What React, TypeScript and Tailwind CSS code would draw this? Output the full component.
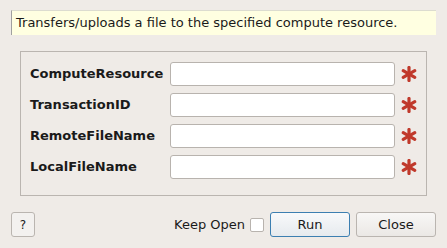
import React from 'react'

const fields = ['ComputeResource', 'TransactionID', 'RemoteFileName', 'LocalFileName']

function Asterisk() {
  return (
    <svg width="16" height="16" viewBox="0 0 16 16" className="shrink-0">
      <g stroke="#c0392b" strokeWidth="3.2" strokeLinecap="round">
        <line x1="8" y1="1.5" x2="8" y2="14.5" />
        <line x1="2.2" y1="4.7" x2="13.8" y2="11.3" />
        <line x1="2.2" y1="11.3" x2="13.8" y2="4.7" />
      </g>
    </svg>
  )
}

export default function App() {
  return (
    <div
      className="w-[447px] h-[248px] bg-[#efebe7] text-[#1a1a1a] flex flex-col"
      style={{ fontFamily: '"DejaVu Sans", sans-serif' }}
    >
      <div className="mt-[10px] mx-[11px] h-[25px] bg-[#ffffe1] border-l border-l-[#a0a0a0] border-t border-t-[#dcdcd0] flex items-center pl-[4px] text-[13px]">
        Transfers/uploads a file to the specified compute resource.
      </div>

      <div className="mt-[16px] mx-[20px] w-[407px] h-[145px] border border-[#bab5b0] flex flex-col pt-[10px] gap-[7px]">
        {fields.map((f) => (
          <div key={f} className="flex items-center h-[24px]">
            <div className="w-[149px] pl-[9px] font-bold text-[13px]">{f}</div>
            <div className="w-[225px] h-[24px] bg-white border border-[#b8b3ae] rounded-[3px]" />
            <div className="ml-[6px]">
              <Asterisk />
            </div>
          </div>
        ))}
      </div>

      <div className="mt-[16px] mx-[11px] flex items-center text-[13px]">
        <button className="w-[24px] h-[25px] border border-[#bab5b0] rounded-[3px] bg-[#f3f1ef] flex items-center justify-center text-[12px]">
          ?
        </button>
        <div className="flex-1" />
        <span className="mr-[5px]">Keep Open</span>
        <div className="w-[14px] h-[14px] bg-white border border-[#b8b3ae] rounded-[2px] mr-[6px]" />
        <button className="w-[80px] h-[25px] border border-[#3c7fb1] rounded-[3px] bg-gradient-to-b from-[#f8f9fa] to-[#e6eaee] mr-[6px]">
          Run
        </button>
        <button className="w-[80px] h-[25px] border border-[#bab5b0] rounded-[3px] bg-gradient-to-b from-[#f8f7f6] to-[#ebe8e5]">
          Close
        </button>
      </div>
    </div>
  )
}
